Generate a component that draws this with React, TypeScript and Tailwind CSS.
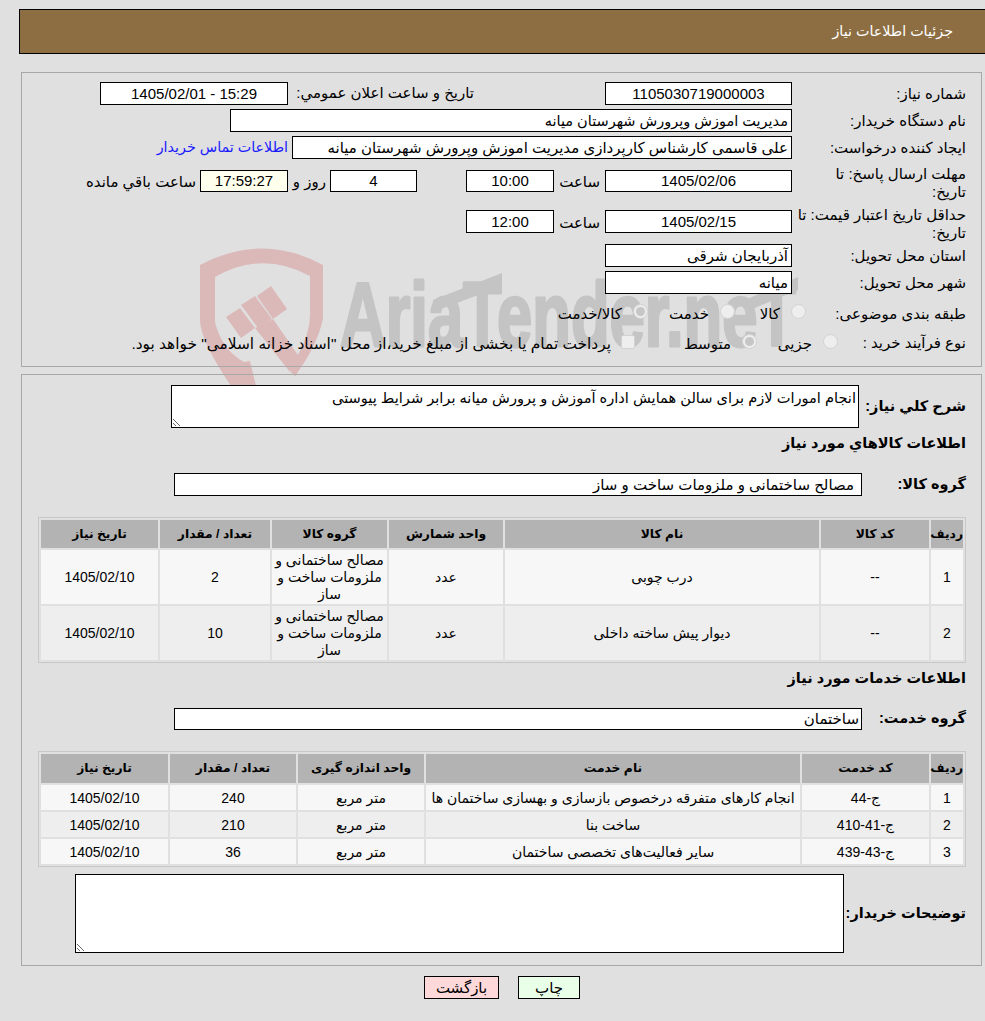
import React from "react";

function Box({ w, h, center, bg, children }: { w: string; h?: string; center?: boolean; bg?: string; children?: React.ReactNode }) {
  return (
    <div className={`${w} ${h ?? "h-[23px] leading-[21px]"} shrink-0 border border-black ${bg ?? "bg-white"} whitespace-nowrap overflow-hidden ${center ? "text-center" : "text-right pr-[3px]"}`}>
      {children}
    </div>
  );
}

function Label({ children }: { children: React.ReactNode }) {
  return <div className="w-[174px] shrink-0 leading-[18px] whitespace-nowrap">{children}</div>;
}

function Radio({ checked }: { checked?: boolean }) {
  return (
    <span className="w-[15px] h-[15px] mb-[5px] shrink-0 rounded-full border border-[#d2d2d2] bg-[#eeeeee] flex items-center justify-center">
      {checked && <span className="w-[9px] h-[9px] rounded-full bg-[#c6c6c6]" />}
    </span>
  );
}

function Opt({ w, checked, children }: { w: string; checked?: boolean; children: React.ReactNode }) {
  return (
    <div className={`${w} shrink-0 flex items-center gap-[11px] whitespace-nowrap`}>
      <Radio checked={checked} />
      <span>{children}</span>
    </div>
  );
}

const th = "bg-[#b3b3b3] font-bold text-[12.3px] text-center p-0";
const td = "text-center text-[14px] p-0 leading-[17px]";

const goods = [
  ["1", "--", "درب چوبی", "عدد", "2"],
  ["2", "--", "دیوار پیش ساخته داخلی", "عدد", "10"],
];
const services = [
  ["1", "ج-44", "انجام کارهای متفرقه درخصوص بازسازی و بهسازی ساختمان ها", "240"],
  ["2", "ج-41-410", "ساخت بنا", "210"],
  ["3", "ج-43-439", "سایر فعالیت‌های تخصصی ساختمان", "36"],
];

function Watermark() {
  return (
    <svg dir="ltr" className="absolute left-0 top-0 z-0" width="985" height="400" viewBox="0 0 985 400">
      <g fill="#dcb9b9">
        <path d="M200 265 Q262 232 323 265 L323 318 Q318 345 295 376 L252 318 L257 311 L296 358 Q310 335 310 315 L310 276 Q262 250 215 277 L215 322 Q222 350 244 362 L250 361 L256 386 L231 386 Q200 340 200 320 Z" />
        <path d="M226 317 L240 308 L255 328 L241 338 Z" />
        <path d="M241 305 L255 296 L272 319 L258 328 Z" />
        <path d="M257 296 L271 286 L287 309 L273 319 Z" />
        <path d="M255 328 L273 319 L300 358 L290 372 Z" />
        <path d="M290 372 L298 370 L296 376 Z" />
      </g>
      <g fill="#c4c4c4">
        <text x="340" y="346" direction="ltr" stroke="#c4c4c4" strokeWidth="3" strokeLinejoin="round" fontFamily="'Liberation Sans', sans-serif" fontWeight="700" fontSize="90" textLength="456" lengthAdjust="spacingAndGlyphs">AriaTender.neT</text>
        <path d="M433 300 L502 273 L502 286 L433 312 Z" />
        <path d="M745 300 L798 277 L798 290 L745 312 Z" />
      </g>
    </svg>
  );
}

export default function App() {
  return (
    <div dir="rtl" className="relative min-h-[1021px] bg-[#e0e0e0] text-black text-[15px] overflow-hidden [font-family:'Liberation_Sans','DejaVu_Sans',sans-serif]">
      <Watermark />
      <div className="relative z-10 pt-[9px]">
        <header className="ml-[19px] h-[45px] bg-[#8d6e42] border-y border-l border-black flex items-center pr-[32px] text-white text-[14.3px]">
          جزئیات اطلاعات نیاز
        </header>

        <section className="mt-[18px] ml-[21px] mr-[3px] h-[295px] border border-[#a8a8a8] pr-[15px] pt-[9px] flex flex-col">
          <div className="flex items-center">
            <Label>شماره نیاز:</Label>
            <Box w="w-[187px]" center>1105030719000003</Box>
            <div className="w-[317px] pr-[131px] whitespace-nowrap">تاریخ و ساعت اعلان عمومي:</div>
            <Box w="w-[188px]" center>15:29 - 1405/02/01</Box>
          </div>
          <div className="flex items-center mt-[4px]">
            <Label>نام دستگاه خریدار:</Label>
            <Box w="w-[562px]"><span className="text-[14.5px]">مدیریت اموزش وپرورش شهرستان میانه</span></Box>
          </div>
          <div className="flex items-center mt-[4px]">
            <Label>ایجاد کننده درخواست:</Label>
            <Box w="w-[500px]">علی قاسمی کارشناس کارپردازی مدیریت اموزش وپرورش شهرستان میانه</Box>
            <a className="mr-[4px] text-[#1a1aff] text-[14.3px] whitespace-nowrap">اطلاعات تماس خریدار</a>
          </div>
          <div className="flex items-start mt-[6px] h-[36px]">
            <Label>مهلت ارسال پاسخ: تا<br />تاریخ:</Label>
            <div className="flex items-start mt-[5px]">
              <Box w="w-[187px]" h="h-[22px] leading-[20px]" center>1405/02/06</Box>
              <div className="w-[51px] pr-[5px] leading-[23px]">ساعت</div>
              <Box w="w-[88px]" h="h-[22px] leading-[20px]" center>10:00</Box>
              <div className="w-[49px]" />
              <Box w="w-[87px]" h="h-[22px] leading-[20px]" center>4</Box>
              <div className="w-[42px] pr-[4px] leading-[23px] whitespace-nowrap">روز و</div>
              <Box w="w-[88px]" h="h-[22px] leading-[20px]" center bg="bg-[#ffffee]">17:59:27</Box>
              <div className="pr-[4px] leading-[23px] whitespace-nowrap">ساعت باقي مانده</div>
            </div>
          </div>
          <div className="flex items-start mt-[5px] h-[36px]">
            <Label>حداقل تاریخ اعتبار قیمت: تا<br />تاریخ:</Label>
            <div className="flex items-start mt-[4px]">
              <Box w="w-[187px]" center>1405/02/15</Box>
              <div className="w-[51px] pr-[5px] leading-[25px]">ساعت</div>
              <Box w="w-[88px]" center>12:00</Box>
            </div>
          </div>
          <div className="flex items-center mt-[2px]">
            <Label>استان محل تحویل:</Label>
            <Box w="w-[187px]">آذربایجان شرقی</Box>
          </div>
          <div className="flex items-center mt-[4px]">
            <Label>شهر محل تحویل:</Label>
            <Box w="w-[187px]">میانه</Box>
          </div>
          <div className="flex items-center mt-[10px] h-[20px]">
            <div className="w-[160px] shrink-0 whitespace-nowrap">طبقه بندی موضوعی:</div>
            <Opt w="w-[71px]">کالا</Opt>
            <Opt w="w-[87px]">خدمت</Opt>
            <Opt w="w-[120px]" checked>کالا/خدمت</Opt>
          </div>
          <div className="flex items-center mt-[10px] h-[20px]">
            <div className="w-[128px] shrink-0 whitespace-nowrap pb-[2px]">نوع فرآیند خرید :</div>
            <Opt w="w-[81px]">جزیی</Opt>
            <Opt w="w-[122px]" checked>متوسط</Opt>
            <div className="flex items-center gap-[10px] whitespace-nowrap">
              <span className="w-[14px] h-[14px] mb-[5px] shrink-0 rounded-[2px] border border-[#d2d2d2] bg-[#eeeeee]" />
              <span className="text-[15.4px]">پرداخت تمام یا بخشی از مبلغ خرید،از محل "اسناد خزانه اسلامی" خواهد بود.</span>
            </div>
          </div>
        </section>

        <section className="mt-[7px] ml-[21px] mr-[3px] h-[592px] border border-[#a8a8a8] pr-[15px] pt-[10px] flex flex-col">
          <div className="flex items-center">
            <div className="w-[107px] shrink-0 font-bold text-[14.5px] whitespace-nowrap pt-[1px]">شرح کلي نیاز:</div>
            <textarea
              readOnly
              dir="rtl"
              className="block w-[688px] h-[43px] border border-black bg-white px-[2px] py-0 leading-[25px] text-[14.6px] outline-none"
              defaultValue="انجام امورات لازم برای سالن همایش اداره آموزش و پرورش میانه برابر شرایط پیوستی"
            />
          </div>
          <h2 className="mt-[5px] h-[20px] leading-[20px] font-bold text-[14.5px]">اطلاعات کالاهاي مورد نیاز</h2>
          <div className="flex items-center mt-[20px]">
            <div className="w-[104px] shrink-0 font-bold text-[14.5px]">گروه کالا:</div>
            <Box w="w-[688px]"><span className="pr-[4px]">مصالح ساختمانی و ملزومات ساخت و ساز</span></Box>
          </div>
          <table className="mt-[21px] w-[928px] table-fixed border-separate border-spacing-[2px] border border-[#c8c8c8]">
            <thead>
              <tr className="h-[28px]">
                <th className={`${th} w-[32px]`}>ردیف</th>
                <th className={`${th} w-[108px]`}>کد کالا</th>
                <th className={`${th} w-[314px]`}>نام کالا</th>
                <th className={`${th} w-[114px]`}>واحد شمارش</th>
                <th className={`${th} w-[115px]`}>گروه کالا</th>
                <th className={`${th} w-[110px]`}>تعداد / مقدار</th>
                <th className={`${th} w-[117px]`}>تاریخ نیاز</th>
              </tr>
            </thead>
            <tbody>
              {goods.map((r, i) => (
                <tr key={r[0]} className={`h-[54px] ${i % 2 ? "bg-[#eeeeee]" : "bg-[#f7f7f7]"}`}>
                  <td className={td}>{r[0]}</td>
                  <td className={td}>{r[1]}</td>
                  <td className={td}>{r[2]}</td>
                  <td className={td}>{r[3]}</td>
                  <td className={td}>مصالح ساختمانی و ملزومات ساخت و ساز</td>
                  <td className={td}>{r[4]}</td>
                  <td className={td}>1405/02/10</td>
                </tr>
              ))}
            </tbody>
          </table>
          <h2 className="mt-[5px] h-[20px] leading-[20px] font-bold text-[14.5px]">اطلاعات خدمات مورد نیاز</h2>
          <div className="flex items-center mt-[20px]">
            <div className="w-[104px] shrink-0 font-bold text-[14.5px]">گروه خدمت:</div>
            <Box w="w-[688px]" h="h-[22px] leading-[20px]"><span className="mr-[-1px]">ساختمان</span></Box>
          </div>
          <table className="mt-[21px] w-[928px] table-fixed border-separate border-spacing-[2px] border border-[#c8c8c8]">
            <thead>
              <tr className="h-[29px]">
                <th className={`${th} w-[32px]`}>ردیف</th>
                <th className={`${th} w-[127px]`}>کد خدمت</th>
                <th className={`${th} w-[374px]`}>نام خدمت</th>
                <th className={`${th} w-[126px]`}>واحد اندازه گیری</th>
                <th className={`${th} w-[126px]`}>تعداد / مقدار</th>
                <th className={`${th} w-[127px]`}>تاریخ نیاز</th>
              </tr>
            </thead>
            <tbody>
              {services.map((r, i) => (
                <tr key={r[0]} className={`h-[25px] ${i % 2 ? "bg-[#eeeeee]" : "bg-[#f7f7f7]"}`}>
                  <td className={`${td} pt-[2px]`}>{r[0]}</td>
                  <td className={`${td} pt-[2px]`}>{r[1]}</td>
                  <td className={`${td} pt-[2px] whitespace-nowrap`}>{r[2]}</td>
                  <td className={`${td} pt-[2px]`}>متر مربع</td>
                  <td className={`${td} pt-[2px]`}>{r[3]}</td>
                  <td className={`${td} pt-[2px]`}>1405/02/10</td>
                </tr>
              ))}
            </tbody>
          </table>
          <div className="flex items-center mt-[7px]">
            <div className="w-[122px] shrink-0 font-bold text-[14.5px] whitespace-nowrap">توضیحات خریدار:</div>
            <textarea readOnly dir="rtl" className="block w-[769px] h-[79px] border border-black bg-white outline-none" />
          </div>
        </section>

        <div className="mt-[10px] flex justify-center gap-[19px] pl-[19px]">
          <button className="w-[62px] h-[23px] border border-black bg-[#eaffe8] leading-[21px]">چاپ</button>
          <button className="w-[75px] h-[23px] border border-black bg-[#ffd9d9] leading-[21px]">بازگشت</button>
        </div>
      </div>
    </div>
  );
}
